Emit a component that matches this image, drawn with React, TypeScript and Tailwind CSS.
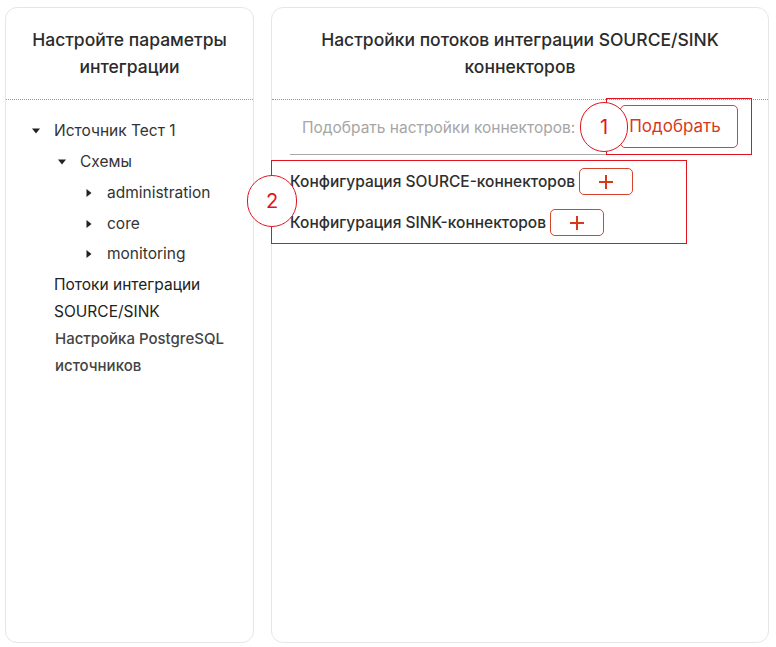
import React from "react";

const Caret = ({ dir }: { dir: "down" | "right" }) =>
  dir === "down" ? (
    <svg width="8" height="6" viewBox="0 0 8 6" className="shrink-0">
      <path d="M0 0.5 L8 0.5 L4 5.5 Z" fill="#222" />
    </svg>
  ) : (
    <svg width="6" height="8" viewBox="0 0 6 8" className="shrink-0">
      <path d="M0.5 0 L5.5 4 L0.5 8 Z" fill="#222" />
    </svg>
  );

const PlusButton = () => (
  <button className="w-[54px] h-[27px] rounded-[5px] border border-[#d6452b] flex items-center justify-center">
    <svg width="16" height="16" viewBox="0 0 16 16">
      <path d="M8 1 V15 M1 8 H15" stroke="#d63a1c" strokeWidth="2" />
    </svg>
  </button>
);

export default function App() {
  return (
    <div
      className="relative w-[776px] h-[647px] bg-white flex gap-[17px] pl-[5px] pr-[7px] pt-[7px] pb-[4px] text-[#333]"
      style={{ fontFamily: "Inter, 'Noto Sans', sans-serif" }}
    >
      {/* Left panel */}
      <div className="w-[249px] h-full border border-[#e6e6e6] rounded-[12px] flex flex-col">
        <div className="pt-[18px] pb-[19px] border-b border-dotted border-[#999] text-center text-[17.5px] leading-[27px] font-medium text-[#2b2b2b]">
          Настройте параметры
          <br />
          интеграции
        </div>
        <div className="pt-[15px] text-[15.5px] text-[#333]">
          <div className="h-[31px] flex items-center pl-[26px] gap-[14px]">
            <Caret dir="down" />
            <span>Источник Тест 1</span>
          </div>
          <div className="h-[31px] flex items-center pl-[52px] gap-[14px]">
            <Caret dir="down" />
            <span>Схемы</span>
          </div>
          <div className="h-[31px] flex items-center pl-[80px] gap-[15px]">
            <Caret dir="right" />
            <span>administration</span>
          </div>
          <div className="h-[31px] flex items-center pl-[80px] gap-[15px]">
            <Caret dir="right" />
            <span>core</span>
          </div>
          <div className="h-[30px] flex items-center pl-[80px] gap-[15px]">
            <Caret dir="right" />
            <span>monitoring</span>
          </div>
          <div className="pl-[48px] leading-[27px] pt-[2px] text-[#222]">
            Потоки интеграции
            <br />
            SOURCE/SINK
          </div>
          <div className="pl-[49px] leading-[27px] text-[15px] font-medium text-[#444]">
            Настройка PostgreSQL
            <br />
            источников
          </div>
        </div>
      </div>

      {/* Right panel */}
      <div className="flex-1 h-full border border-[#e6e6e6] rounded-[12px] flex flex-col">
        <div className="pt-[18px] pb-[19px] border-b border-dotted border-[#999] text-center text-[17.5px] leading-[27px] font-medium text-[#2b2b2b]">
          Настройки потоков интеграции SOURCE/SINK
          <br />
          коннекторов
        </div>
        <div className="mx-[18px] mt-[2px] h-[53px] pl-[12px] pr-[12px] border-b border-[#a8a8a8] flex items-center justify-between">
          <span className="text-[15.5px] text-[#a6a6a6]">Подобрать настройки коннекторов:</span>
          <button className="w-[118px] h-[43px] rounded-[5px] border border-[#d6452b] text-[17px] text-[#d63a1c] pr-[8px] mb-[3px]">
            Подобрать
          </button>
        </div>
        <div className="pl-[18px] pt-[13px] flex flex-col gap-[14px] text-[15.5px] font-medium text-[#2e2e2e]">
          <div className="flex items-center gap-[4px]">
            <span className="pt-[1px]">Конфигурация SOURCE-коннекторов</span>
            <PlusButton />
          </div>
          <div className="flex items-center gap-[4px]">
            <span className="pt-[1px]">Конфигурация SINK-коннекторов</span>
            <PlusButton />
          </div>
        </div>
      </div>

      {/* Annotation overlays */}
      <div className="absolute left-[606px] top-[98px] w-[146px] h-[57px] border-[1.5px] border-[#e0141e] pointer-events-none" />
      <div className="absolute left-[580px] top-[102px] w-[48px] h-[50px] rounded-full border border-[#e0141e] bg-white flex items-center justify-center text-[20px] text-[#e0141e]">
        1
      </div>
      <div className="absolute left-[271px] top-[160px] w-[416px] h-[84px] border-[1.5px] border-[#e0141e] pointer-events-none" />
      <div className="absolute left-[247px] top-[175px] w-[50px] h-[52px] rounded-full border border-[#e0141e] bg-white flex items-center justify-center text-[20px] text-[#e0141e]">
        2
      </div>
    </div>
  );
}
